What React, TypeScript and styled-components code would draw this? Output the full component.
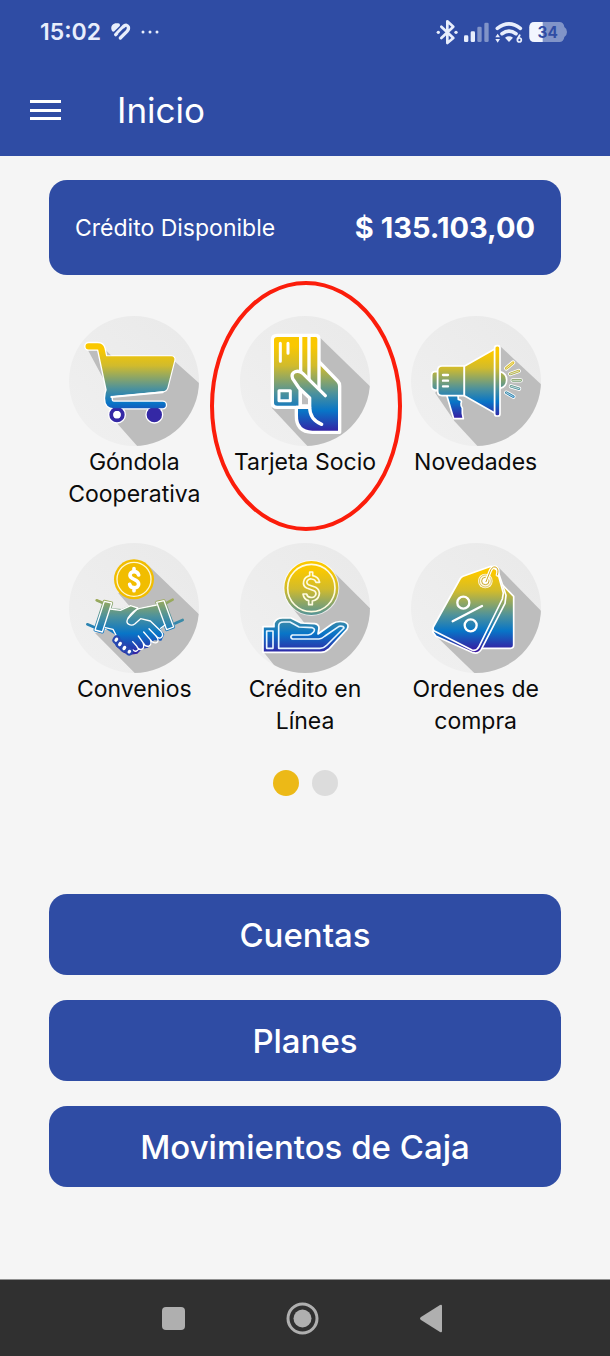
import React from "react";
import styled, { createGlobalStyle } from "styled-components";

const GlobalStyle = createGlobalStyle`
  * { box-sizing: border-box; }
  html, body, #root { height: 100%; }
  body {
    margin: 0;
    background: #f5f5f5;
    color: #0b0b0b;
    font-family: Inter, "Noto Sans", sans-serif;
  }
  button { font-family: inherit; border: 0; cursor: pointer; }
`;

const Screen = styled.div`
  min-height: 100%;
  display: flex;
  flex-direction: column;
`;

const Header = styled.header`
  background: #2f4ca4;
  color: #fff;
`;

const StatusBar = styled.div`
  display: flex;
  justify-content: space-between;
  align-items: center;
  height: 64px;
  padding: 0 40px;
  color: #e8eefc;
`;

const StatusGroup = styled.div`
  display: flex;
  align-items: center;
  gap: 10px;
`;

const Clock = styled.time`
  font-size: 23px;
  line-height: 32px;
  font-weight: 600;
`;

const AppBar = styled.div`
  display: flex;
  align-items: center;
  gap: 56px;
  height: 92px;
  padding: 0 30px;
`;

const MenuButton = styled.button`
  display: flex;
  flex-direction: column;
  justify-content: space-between;
  width: 31px;
  height: 20px;
  padding: 0;
  background: none;
`;

const MenuLine = styled.span`
  height: 3px;
  background: #fff;
`;

const Title = styled.h1`
  margin: 0;
  font-size: 35px;
  line-height: 44px;
  font-weight: 400;
`;

const Main = styled.main`
  flex: 1;
  display: flex;
  flex-direction: column;
  padding: 24px 49px 92px;
`;

const CreditCard = styled.section`
  display: flex;
  align-items: center;
  justify-content: space-between;
  height: 95px;
  padding: 0 26px;
  border-radius: 18px;
  background: #2f4ca4;
  color: #fff;
`;

const CreditLabel = styled.span`
  font-size: 23px;
  line-height: 32px;
`;

const CreditAmount = styled.strong`
  font-size: 29px;
  line-height: 36px;
  font-weight: 700;
`;

const Services = styled.nav`
  display: grid;
  grid-template-columns: repeat(3, 1fr);
  row-gap: 33px;
  margin-top: 41px;
`;

const Service = styled.a`
  display: flex;
  flex-direction: column;
  align-items: center;
  position: relative;
  color: inherit;
  text-decoration: none;
  text-align: center;
`;

const ServiceIcon = styled.svg`
  display: block;
  width: 130px;
  height: 130px;
`;

const ServiceLabel = styled.span`
  width: 150px;
  font-size: 23px;
  line-height: 32px;
`;

const Highlight = styled.span`
  position: absolute;
  top: -35px;
  left: 50%;
  width: 192px;
  height: 250px;
  margin-left: -95px;
  border: 4px solid #fb1d0b;
  border-radius: 50%;
`;

const Pager = styled.div`
  display: flex;
  justify-content: center;
  gap: 13px;
  margin-top: 33px;
`;

const Dot = styled.button<{ $active?: boolean }>`
  width: 26px;
  height: 26px;
  padding: 0;
  border-radius: 50%;
  background: ${(p) => (p.$active ? "#ecb917" : "#dcdcdc")};
`;

const Actions = styled.div`
  display: flex;
  flex-direction: column;
  gap: 25px;
  margin-top: 98px;
`;

const Action = styled.button`
  height: 81px;
  padding: 0;
  border-radius: 18px;
  background: #2f4ca4;
  color: #fff;
  font-size: 33px;
  line-height: 40px;
  font-weight: 500;
`;

const SystemNav = styled.footer`
  display: flex;
  align-items: center;
  justify-content: center;
  gap: 96px;
  height: 77px;
  padding-right: 5px;
  border-top: 1px solid #909090;
  background: #303030;
`;

const NavButton = styled.button`
  display: flex;
  width: 33px;
  height: 33px;
  padding: 0;
  background: none;
`;

type DiscProps = { id: string; x: number; y: number; shadow: string; children: React.ReactNode; top?: number; bottom?: number };

function Disc({ id, x, y, shadow, top = 90, bottom = 370, children }: DiscProps) {
  return (
    <ServiceIcon viewBox={`${x} ${y} 390 390`} aria-hidden="true">
      <defs>
        <linearGradient id={id} gradientUnits="userSpaceOnUse" x1="0" y1={top} x2="0" y2={bottom}>
          <stop offset="0.1" stopColor="#fac800" />
          <stop offset="0.3" stopColor="#d1bb2c" />
          <stop offset="0.58" stopColor="#4e929b" />
          <stop offset="0.76" stopColor="#0875c7" />
          <stop offset="1" stopColor="#3a16a0" />
        </linearGradient>
        <linearGradient id={`${id}-disc`} x1="0" y1="1" x2="1" y2="0">
          <stop offset="0" stopColor="#f0f0f0" />
          <stop offset="1" stopColor="#e9e9e9" />
        </linearGradient>
        <clipPath id={`${id}-clip`}>
          <circle cx={x + 195} cy={y + 195} r="195" />
        </clipPath>
      </defs>
      <circle cx={x + 195} cy={y + 195} r="195" fill={`url(#${id}-disc)`} />
      <path d={shadow} fill="#bdbdbd" clipPath={`url(#${id}-clip)`} />
      {children}
    </ServiceIcon>
  );
}

function CartIcon() {
  const g = "url(#cart)";
  const handle = "M86 121H113Q122 121 124 129L150 252Q145 264 145 277Q145 297 162 297H308";
  const basket = "M123 151H334Q345 152 343 163L322 245Q319 255 308 256L155 271L145 250Z";
  return (
    <Disc id="cart" x={27} y={30} top={105} bottom={350} shadow="M84 133L130 125L155 150L343 165L450 260V450H258L165 345L158 270Z">
      <circle cx="171" cy="326" r="27" fill="#fff" />
      <circle cx="283" cy="326" r="27" fill="#fff" />
      <path d={handle} fill="none" stroke="#fff" strokeWidth="27" strokeLinecap="round" strokeLinejoin="round" />
      <path d={basket} fill={g} stroke="#fff" strokeWidth="7" strokeLinejoin="round" />
      <circle cx="171" cy="326" r="17" fill="#fff" stroke="#3428a5" strokeWidth="12" />
      <circle cx="283" cy="326" r="23" fill="#3428a5" />
      <path d={handle} fill="none" stroke={g} strokeWidth="19" strokeLinecap="round" strokeLinejoin="round" />
      <path d={basket} fill={g} />
      <path d="M154 273L308 259" stroke="#fff" strokeWidth="6" strokeLinecap="round" />
      <circle cx="171" cy="326" r="11" fill="#fff" />
    </Disc>
  );
}

function CardIcon() {
  const g = "url(#card)";
  return (
    <Disc id="card" x={30} y={30} top={90} bottom={385} shadow="M265 90L450 270V450H260L125 305Z">
      <g stroke="#fff" strokeWidth="10" strokeLinejoin="round" strokeLinecap="round">
        <path d="M265 165L323 225Q329 231 329 240V379H247Q198 378 199 328V300H250V165Z" fill={g} />
        <path d="M142 88H257Q267 88 267 99V250L211 252V304H142Q127 304 127 290V102Q127 88 142 88Z" fill={g} />
        <path d="M212 90V203M237 90V222" fill="none" />
        <path d="M151 112V166M174 112V142M147 254H181V284H147Z" fill="none" strokeWidth="9" />
        <path d="M267 249L286 269L300 320L275 355Q239 341 239 304V276L207 246L188 218C180 197 205 189 219 203Z" fill={g} stroke="none" />
        <path d="M286 269L219 203C205 189 180 197 188 218L207 246L239 276V304Q239 341 275 355" fill="none" />
        <path d="M211 250V304M239 304H199" fill="none" />
      </g>
    </Disc>
  );
}

function MegaphoneIcon() {
  const g = "url(#mega)";
  const rays = "M319 187L339 170M331 204L356 195M338 223H362M333 241L357 248M319 260L340 272";
  return (
    <Disc id="mega" x={33} y={30} top={120} bottom={340} shadow="M300 120L450 260V450H260L163 345L105 260Z">
      <g fill={g} stroke="#fff" strokeWidth="5" strokeLinejoin="round">
        <path d="M300 197Q320 202 320 222T300 247Z" />
        <path d="M113 197H103Q95 198 95 207V241Q95 251 105 252H113Z" />
        <path d="M140 267H174L175 280Q188 283 183 292Q182 300 187 306V322L190 338H161Z" />
        <path d="M126 180H193V269H126Q113 269 113 256V193Q113 180 126 180Z" />
        <path d="M193 181L284 129V321L193 269Z" />
        <rect x="284" y="119" width="16" height="211" rx="7" />
      </g>
      <path d="M129 207H144M129 224H144M129 241H144" stroke="#fff" strokeWidth="7" strokeLinecap="round" />
      <g strokeLinecap="round">
        <path d={rays} stroke="#fff" strokeWidth="13" />
        <path d={rays} stroke={g} strokeWidth="8" />
        <path d={rays} stroke="#fff" strokeWidth="2" />
      </g>
    </Disc>
  );
}

function HandshakeIcon() {
  const g = "url(#shake)";
  return (
    <Disc id="shake" x={27} y={24} top={75} bottom={365} shadow="M266 92L450 270V450H260L105 294L190 270L240 250L175 175Z">
      <circle cx="222" cy="133" r="60" fill="#f1bd00" />
      <circle cx="222" cy="133" r="51" fill="none" stroke="#fff7cf" strokeWidth="4" />
      <path
        d="M236 120C232 106 210 107 210 121C210 136 236 130 236 147C236 162 212 162 209 148M222 110V101M222 158V167"
        fill="none"
        stroke="#fff"
        strokeWidth="11"
        strokeLinecap="round"
        strokeLinejoin="round"
      />
      <g fill="none" stroke={g} strokeWidth="8" strokeLinecap="round">
        <path d="M110 196L136 207M82 268L110 280M338 194L312 208M368 255L346 265" />
      </g>
      <path d="M145 219L185 222L213 210L239 218L291 207L315 270L302 284L313 298L304 317L282 316L264 338L246 342L232 356L207 360L188 352L168 334L158 316L167 300L133 279Z" fill={g} />
      <g fill={g} stroke={g} strokeWidth="9" strokeLinejoin="round">
        <path d="M133 199L155 204L127 291L105 285ZM290 202L312 197L341 276L320 284Z" />
      </g>
      <g fill="none" stroke="#fff" strokeWidth="4" strokeLinejoin="round" strokeLinecap="round">
        <path d="M133 199L155 204L127 291L105 285ZM290 202L312 197L341 276L320 284Z" />
        <path d="M151 222L181 226L212 212L234 219L203 252C195 268 214 275 225 266L242 251L271 258L303 289C315 303 300 317 289 304L267 281" />
        <path d="M136 278L159 283L168 300M289 210L239 220Q219 225 204 249M315 270L302 280M289 304C305 324 280 331 271 314L251 291M271 314C280 335 258 341 249 323L235 303M249 323C258 345 237 350 230 333L218 320M219 345Q228 354 236 342" />
      </g>
      <g fill="#fff" stroke="#2948b0" strokeWidth="6">
        <ellipse cx="169" cy="314" rx="8" ry="10" transform="rotate(35 169 314)" />
        <ellipse cx="180" cy="327" rx="8" ry="10" transform="rotate(35 180 327)" />
        <ellipse cx="193" cy="339" rx="8" ry="10" transform="rotate(35 193 339)" />
        <ellipse cx="208" cy="350" rx="8" ry="9" transform="rotate(35 208 350)" />
      </g>
    </Disc>
  );
}

function LoanIcon() {
  const g = "url(#loan)";
  return (
    <Disc id="loan" x={30} y={24} top={75} bottom={365} shadow="M305 105L450 250V450H180L100 350L260 310L188 220Z">
      <circle cx="244" cy="159" r="84" fill="#fff" fillOpacity="0.7" />
      <circle cx="244" cy="159" r="81" fill={g} />
      <circle cx="244" cy="159" r="71" fill="none" stroke="#fffbe0" strokeWidth="5" />
      <path d="M239 111V122C219 127 214 150 230 159L254 168C263 177 254 190 242 187Q232 187 230 177H219Q222 194 236 197V209H247V198C270 194 275 168 257 157L235 149C224 141 236 130 245 132Q256 133 258 142H269Q266 126 248 122V111Z" fill="none" stroke="#fffbe0" strokeWidth="5" strokeLinejoin="round" />
      <g fill={g} stroke="#fff" strokeWidth="5" strokeLinejoin="round">
        <path d="M99 275H132V265Q138 248 160 249H183L213 264L254 266Q267 268 267 279L264 297L306 267Q322 256 343 261Q360 267 351 283L298 341Q286 352 273 352H99Z" />
      </g>
      <g fill="none" stroke="#e6f5ff" strokeWidth="5" strokeLinejoin="round" strokeLinecap="round">
        <path d="M110 288H129V340H110Z" />
        <path d="M146 340V273Q146 261 161 261H180L207 276L247 278Q258 282 250 292Q243 301 232 300H187Q178 306 187 312H267Q276 311 285 303L327 274Q340 272 342 279L291 330Q281 340 270 340Z" />
      </g>
    </Disc>
  );
}

function TagsIcon() {
  const g = "url(#tags)";
  return (
    <Disc id="tags" x={33} y={24} top={90} bottom={350} shadow="M291 92L450 255V450H260L105 300Z">
      <g fill={g} stroke="#fff" strokeWidth="5" strokeLinejoin="round">
        <path d="M300 142L341 184V331Q341 340 332 340H230Z" />
        <path d="M98 290L205 137L275 108L295 112L318 181L315 205L244 343Q235 358 219 353L108 304Z" />
        <path d="M189 124L273 94L291 105L310 174L307 192L237 335Q230 349 216 345L103 288Q97 284 100 276L180 132Q183 127 189 124Z" />
      </g>
      <g fill="none" stroke="#fff" strokeWidth="7" strokeLinecap="round">
        <circle cx="190" cy="203" r="18" />
        <circle cx="212" cy="271" r="18" />
        <path d="M158 259L246 213" />
      </g>
      <circle cx="256" cy="138" r="22" fill="#fff8df" />
      <circle cx="256" cy="138" r="18" fill="none" stroke="#c9aa30" strokeWidth="2" />
      <circle cx="256" cy="138" r="11" fill="#fff" stroke="#c9aa30" strokeWidth="3" />
      <path d="M258 140L272 105Q280 91 290 98Q297 105 292 120" fill="none" stroke="#fff" strokeWidth="10" strokeLinecap="round" />
      <path d="M258 140L272 105Q280 91 290 98Q297 105 292 120" fill="none" stroke="#d2a91c" strokeWidth="3" strokeLinecap="round" />
    </Disc>
  );
}

const services = [
  { label: "Góndola Cooperativa", Icon: CartIcon },
  { label: "Tarjeta Socio", Icon: CardIcon, highlighted: true },
  { label: "Novedades", Icon: MegaphoneIcon },
  { label: "Convenios", Icon: HandshakeIcon },
  { label: "Crédito en Línea", Icon: LoanIcon },
  { label: "Ordenes de compra", Icon: TagsIcon },
];

const actions = ["Cuentas", "Planes", "Movimientos de Caja"];

function StatusIcons() {
  return (
    <svg width="134" height="30" viewBox="50 48 402 90" role="img" aria-label="Bluetooth, señal, Wi-Fi 6, batería 34%">
      <path d="M66 77L102 111L84 126V61L102 77L66 111" fill="none" stroke="#e8eefc" strokeWidth="8" strokeLinejoin="round" strokeLinecap="round" />
      <circle cx="57" cy="94" r="5" fill="#e8eefc" />
      <circle cx="110" cy="94" r="5" fill="#e8eefc" />
      <rect x="134" y="103" width="13" height="20" rx="4" fill="#e8eefc" />
      <rect x="154" y="91" width="13" height="32" rx="4" fill="#e8eefc" />
      <rect x="174" y="77" width="13" height="46" rx="4" fill="#8194c8" />
      <rect x="195" y="65" width="13" height="58" rx="4" fill="#8194c8" />
      <g fill="none" stroke="#e8eefc" strokeWidth="11" strokeLinecap="round">
        <path d="M234 82Q269 55 303 82M248 98Q269 83 290 98" />
      </g>
      <path d="M257 110Q269 102 281 110L269 123ZM228 109L235 98L242 109ZM228 114H242L235 125Z" fill="#e8eefc" />
      <path d="M301 103L295 113" stroke="#e8eefc" strokeWidth="6" strokeLinecap="round" />
      <circle cx="300" cy="117" r="6" fill="none" stroke="#e8eefc" strokeWidth="5" />
      <path d="M346 63H420Q433 63 435 78Q443 83 443 93T435 108Q433 123 420 123H346Q330 123 330 107V79Q330 63 346 63Z" fill="#8194c8" />
      <path d="M370 63H346Q330 63 330 79V107Q330 123 346 123H370Z" fill="#f2f6ff" />
      <text x="385" y="110" textAnchor="middle" fontFamily="Inter, sans-serif" fontSize="46" fontWeight="700" fill="#2f4ca4">34</text>
    </svg>
  );
}

export default function App() {
  return (
    <Screen>
      <GlobalStyle />
      <Header>
        <StatusBar>
          <StatusGroup>
            <Clock>15:02</Clock>
            <svg width="20" height="18" viewBox="328 68 60 54" aria-hidden="true">
              <g fill="none" stroke="#e8eefc" strokeWidth="10" strokeLinecap="round" strokeLinejoin="round">
                <path d="M335 89Q331 78 341 74H350L336 88" />
                <path d="M342 103L367 77Q376 71 380 80Q382 87 376 93L356 113" />
                <path d="M352 101L366 87" strokeWidth="5" stroke="#2f4ca4" />
              </g>
            </svg>
            <svg width="18" height="4" viewBox="0 0 36 8" aria-hidden="true" fill="#e8eefc">
              <circle cx="4" cy="4" r="3" />
              <circle cx="18" cy="4" r="3" />
              <circle cx="32" cy="4" r="3" />
            </svg>
          </StatusGroup>
          <StatusIcons />
        </StatusBar>
        <AppBar>
          <MenuButton aria-label="Abrir menú">
            <MenuLine />
            <MenuLine />
            <MenuLine />
          </MenuButton>
          <Title>Inicio</Title>
        </AppBar>
      </Header>
      <Main>
        <CreditCard>
          <CreditLabel>Crédito Disponible</CreditLabel>
          <CreditAmount>$ 135.103,00</CreditAmount>
        </CreditCard>
        <Services aria-label="Servicios">
          {services.map(({ label, Icon, highlighted }) => (
            <Service href="#" key={label}>
              <Icon />
              <ServiceLabel>{label}</ServiceLabel>
              {highlighted && <Highlight />}
            </Service>
          ))}
        </Services>
        <Pager>
          <Dot $active aria-label="Página 1" />
          <Dot aria-label="Página 2" />
        </Pager>
        <Actions>
          {actions.map((name) => (
            <Action key={name}>{name}</Action>
          ))}
        </Actions>
      </Main>
      <SystemNav>
        <NavButton aria-label="Recientes">
          <svg width="33" height="33" viewBox="0 0 33 33" fill="#afafaf">
            <rect x="5" y="5" width="23" height="23" rx="4" />
          </svg>
        </NavButton>
        <NavButton aria-label="Inicio">
          <svg width="33" height="33" viewBox="0 0 66 66" fill="#afafaf">
            <circle cx="33" cy="33" r="18" />
            <circle cx="33" cy="33" r="29" fill="none" stroke="#afafaf" strokeWidth="6" />
          </svg>
        </NavButton>
        <NavButton aria-label="Atrás">
          <svg width="33" height="33" viewBox="0 0 66 66" fill="#afafaf">
            <path d="M12 30L50 6Q54 4 54 8V58Q54 62 50 60L12 36Q8 33 12 30Z" />
          </svg>
        </NavButton>
      </SystemNav>
    </Screen>
  );
}
